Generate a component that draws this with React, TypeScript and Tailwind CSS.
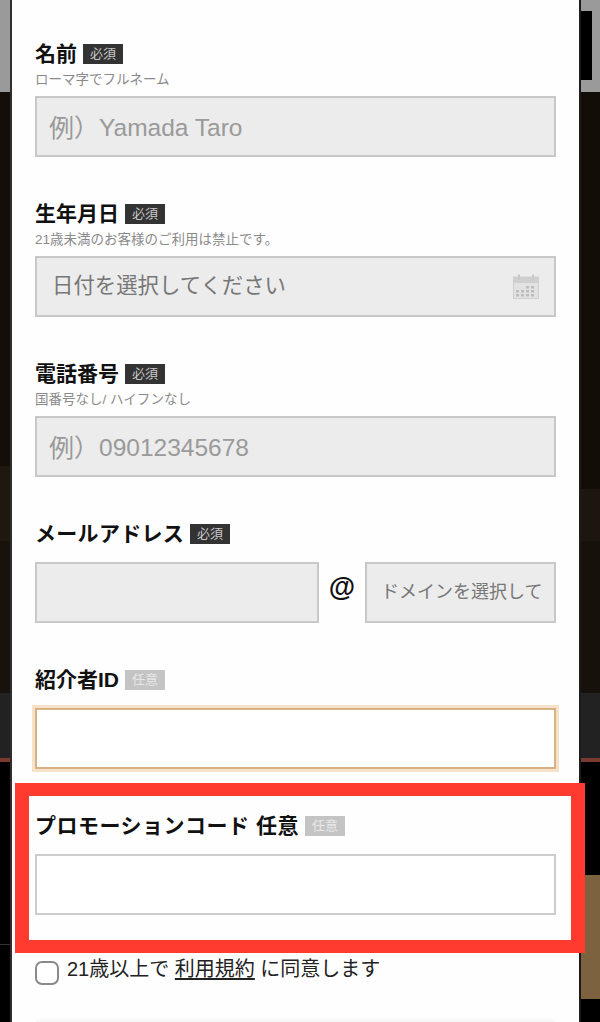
const FONT = "font-['Liberation_Sans','Noto_Sans_CJK_JP',sans-serif]"

function Badge({ optional }: { optional?: boolean }) {
  return (
    <span
      className={`flex h-5 w-10 shrink-0 items-center justify-center text-[13px] font-normal tracking-normal ${
        optional ? 'bg-[#c4c4c4] text-[#e8e8e8]' : 'bg-[#333333] text-[#c8c8c8]'
      }`}
    >
      {optional ? '任意' : '必須'}
    </span>
  )
}

function FieldLabel({ text, optional, className = '' }: { text: string; optional?: boolean; className?: string }) {
  return (
    <div className="flex h-5 shrink-0 items-center gap-[6px]">
      <span className={`whitespace-nowrap text-[21px] font-bold leading-5 text-[#111111] ${className}`}>{text}</span>
      <Badge optional={optional} />
    </div>
  )
}

function Help({ text }: { text: string }) {
  return <p className="flex h-8 shrink-0 items-center text-[13.5px] text-[#8a8a8a]">{text}</p>
}

function InputBox({ children, className = '' }: { children?: React.ReactNode; className?: string }) {
  return (
    <div
      className={`flex h-[61px] shrink-0 items-center whitespace-nowrap border-2 border-[#c8c8c8] bg-[#ececec] ${className}`}
    >
      {children}
    </div>
  )
}

function Placeholder({ value }: { value: string }) {
  return (
    <InputBox className="pl-3 pt-1 text-[24.5px] text-[#9a9a9a]">
      <span className="text-[25px]">例）</span>
      {value}
    </InputBox>
  )
}

function CalendarIcon() {
  return (
    <svg width="26" height="25" viewBox="0 0 26 25" className="shrink-0">
      <rect x="0.5" y="3" width="25" height="21.5" fill="#e2e2e2" stroke="#cfcfcf" />
      <rect x="0.5" y="3" width="25" height="6" fill="#cfcfcf" />
      <rect x="5" y="0.5" width="2" height="5" fill="#c8c8c8" />
      <rect x="19" y="0.5" width="2" height="5" fill="#c8c8c8" />
      {[12, 16, 20].map((y) =>
        [3, 8, 13, 18].map((x) => (
          <rect key={`${x}-${y}`} x={x} y={y} width="3" height="2.5" fill={y === 12 && x < 13 ? '#e2e2e2' : '#bdbdbd'} />
        )),
      )}
    </svg>
  )
}

export default function App() {
  return (
    <div className={`relative flex h-[1022px] w-[600px] overflow-hidden bg-black ${FONT}`}>
      {/* page behind the modal, left edge */}
      <div className="flex w-3 shrink-0 flex-col border-r-2 border-[#2e2e2e]">
        <div className="h-[92px] bg-[#9a9a9a]" />
        <div className="h-[374px] bg-[#130e09]" />
        <div className="h-[75px] bg-[#1f1811]" />
        <div className="h-[152px] bg-[#18120c]" />
        <div className="h-[65px] bg-[#222222]" />
        <div className="h-1 bg-[#7a3a30]" />
        <div className="h-[183px] border-b border-[#333333] bg-black" />
      </div>

      {/* modal */}
      <main className="flex w-[567px] shrink-0 flex-col bg-[#fefefe] px-[23px] pt-11">
        <FieldLabel text="名前" />
        <Help text="ローマ字でフルネーム" />
        <Placeholder value="Yamada Taro" />

        <div className="mt-[47px] shrink-0">
          <FieldLabel text="生年月日" />
          <Help text="21歳未満のお客様のご利用は禁止です。" />
          <InputBox className="justify-between pl-[15px] pr-[15px] text-[21.4px] text-[#777777]">
            日付を選択してください
            <CalendarIcon />
          </InputBox>
        </div>

        <div className="mt-[47px] shrink-0">
          <FieldLabel text="電話番号" />
          <Help text="国番号なし/ ハイフンなし" />
          <Placeholder value="09012345678" />
        </div>

        <div className="mt-[47px] shrink-0">
          <FieldLabel text="メールアドレス" className="tracking-[0.3px]" />
          <div className="mt-[18px] flex">
            <InputBox className="w-[284px]" />
            <span className="flex w-[46px] shrink-0 justify-center pt-[9px] text-[27px] font-bold leading-8 text-[#111111]">
              @
            </span>
            <InputBox className="w-[191px] pl-[14px] text-[18px] text-[#777777]">ドメインを選択して</InputBox>
          </div>
        </div>

        <div className="mt-[47px] shrink-0">
          <FieldLabel text="紹介者ID" optional />
          <div className="mt-[18px] h-[61px] border-2 border-[#d9b283] bg-white shadow-[0_0_0_3px_#f6e2cb]" />
        </div>

        <div className="mt-[47px] shrink-0">
          <FieldLabel text="プロモーションコード 任意" optional className="tracking-[0.5px]" />
          <div className="mt-[18px] h-[61px] border-2 border-[#cccccc] bg-white" />
        </div>

        <div className="mt-[46px] flex shrink-0 gap-2">
          <span className="h-[24px] w-[24px] shrink-0 rounded-[7px] border-2 border-[#8a8a8a] bg-white" />
          <p className="-mt-[4px] whitespace-pre text-[20px] leading-6 text-[#222222]">
            21歳以上で <span className="underline underline-offset-2">利用規約</span> に同意します
          </p>
        </div>

        <div className="mt-8 h-10 shrink-0 rounded-t-lg bg-gradient-to-b from-[#ffffff] to-[#b0b0b0]" />
      </main>

      {/* page behind the modal, right edge */}
      <div className="flex min-w-0 flex-1 flex-col border-l-2 border-[#1c1c1c]">
        <div className="h-[92px] bg-[#9a9a9a] pr-2 pt-[11px]">
          <div className="h-[69px] bg-black" />
        </div>
        <div className="h-[397px] bg-[#130d08]" />
        <div className="h-[52px] bg-[#1d150f]" />
        <div className="h-[152px] bg-[#17110c]" />
        <div className="h-[65px] bg-[#222222]" />
        <div className="h-1 bg-[#7a3a30]" />
        <div className="h-[113px] bg-black" />
        <div className="h-[124px] bg-[#7d6240]" />
      </div>

      {/* red annotation frame */}
      <div className="pointer-events-none absolute left-[15px] top-[783px] h-[170px] w-[570px] border-x-[14px] border-y-[13px] border-x-[#ff3b30] border-y-[#ff3b30]" />
    </div>
  )
}
